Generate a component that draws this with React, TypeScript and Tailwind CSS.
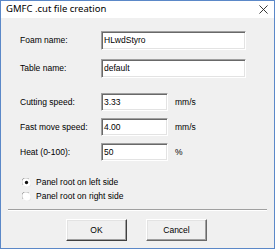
import React from "react";

const inputCls =
  "bg-white border border-t-[#a0a0a0] border-l-[#a0a0a0] border-r-white border-b-white shadow-[inset_1px_1px_0_#696969,inset_-1px_-1px_0_#e3e3e3] pl-[2px] flex items-center text-[8.5px] text-black whitespace-nowrap";

function Radio({ checked }: { checked: boolean }) {
  return (
    <svg width="9" height="9" viewBox="0 0 12 12" className="shrink-0">
      <circle cx="6" cy="6" r="5.5" fill="white" />
      <path d="M1.2 9 A5.3 5.3 0 0 1 9 1.2" fill="none" stroke="#a0a0a0" strokeWidth="1.2" />
      <path d="M10.8 3 A5.3 5.3 0 0 1 3 10.8" fill="none" stroke="#e8e8e8" strokeWidth="1.2" />
      {checked && <circle cx="6" cy="6" r="2.2" fill="#111" />}
    </svg>
  );
}

function Row({
  label,
  value,
  wide,
  unit,
  className,
}: {
  label: string;
  value: string;
  wide?: boolean;
  unit?: string;
  className?: string;
}) {
  return (
    <div className={"flex items-center " + (className ?? "")}>
      <div className="w-[81px] text-[8.5px] text-black whitespace-nowrap">{label}</div>
      <div className={inputCls + (wide ? " w-[145px] h-[19px]" : " w-[67px] h-[18px]")}>{value}</div>
      {unit && <div className="ml-[7px] text-[8.5px] text-black">{unit}</div>}
    </div>
  );
}

export default function App() {
  return (
    <div
      className="w-[275px] h-[249px] border border-[#5b88c8] flex flex-col bg-[#f0f0f0] overflow-hidden"
      style={{ fontFamily: '"Liberation Sans", Arial, sans-serif' }}
    >
      <div className="h-[17px] bg-white flex items-center justify-between pl-[5px] pr-[5px] shrink-0">
        <span className="text-[9.5px] text-black" style={{ fontFamily: '"Noto Sans", "Open Sans", sans-serif' }}>
          GMFC .cut file creation
        </span>
        <svg width="9" height="9" viewBox="0 0 10 10" className="mr-[1px]">
          <path d="M0.5 0.5 L9.5 9.5 M9.5 0.5 L0.5 9.5" stroke="#222" strokeWidth="1" />
        </svg>
      </div>
      <div className="flex flex-col pl-[19px] pt-[13px]">
        <Row label="Foam name:" value="HLwdStyro" wide />
        <Row label="Table name:" value="default" wide className="mt-[9px]" />
        <Row label="Cutting speed:" value="3.33" unit="mm/s" className="mt-[15px]" />
        <Row label="Fast move speed:" value="4.00" unit="mm/s" className="mt-[7px]" />
        <Row label="Heat (0-100):" value="50" unit="%" className="mt-[7px]" />
        <div className="flex items-center gap-[5px] mt-[15px] pl-[2px] text-[8.5px] text-black h-[12px]">
          <Radio checked />
          <span>Panel root on left side</span>
        </div>
        <div className="flex items-center gap-[5px] mt-[2px] pl-[2px] text-[8.5px] text-black h-[12px]">
          <Radio checked={false} />
          <span>Panel root on right side</span>
        </div>
      </div>
      <div className="mx-[7px] mt-[7px] h-[2px] border-t border-t-[#a0a0a0] border-b border-b-white" />
      <div className="flex justify-center gap-[19px] mt-[8px] pr-[2px]">
        <button className="w-[61px] h-[22px] bg-[#f0f0f0] border border-t-white border-l-white border-r-[#404040] border-b-[#404040] shadow-[inset_-1px_-1px_0_#a0a0a0,inset_1px_1px_0_#e3e3e3] text-[8.5px] text-black">
          OK
        </button>
        <button className="w-[61px] h-[22px] bg-[#f0f0f0] border border-t-white border-l-white border-r-[#696969] border-b-[#696969] shadow-[inset_-1px_-1px_0_#a0a0a0,inset_1px_1px_0_#e3e3e3] text-[8.5px] text-black">
          Cancel
        </button>
      </div>
    </div>
  );
}
